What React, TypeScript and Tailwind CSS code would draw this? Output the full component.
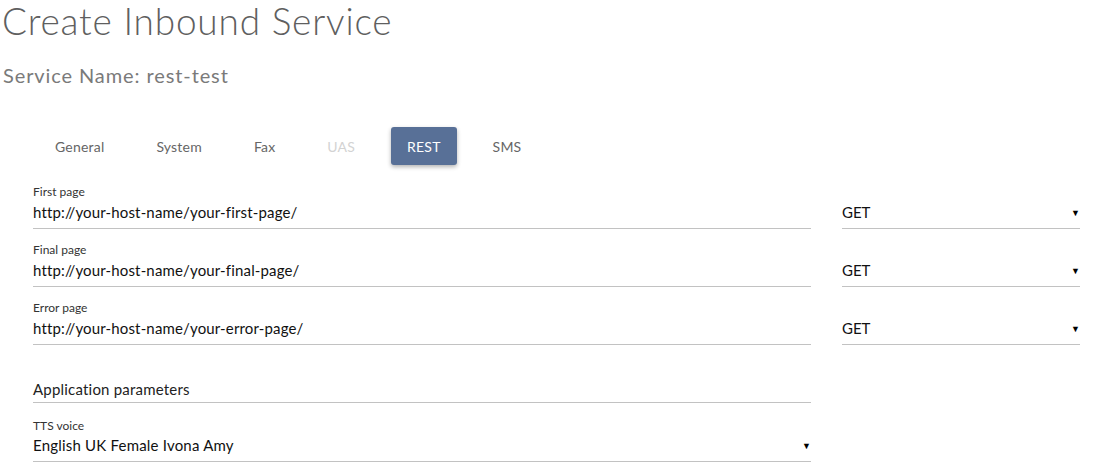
const tabs = [
  { name: "General", state: "normal" },
  { name: "System", state: "normal" },
  { name: "Fax", state: "normal" },
  { name: "UAS", state: "disabled" },
  { name: "REST", state: "active" },
  { name: "SMS", state: "normal" },
];

const pages = [
  { label: "First page", value: "http://your-host-name/your-first-page/" },
  { label: "Final page", value: "http://your-host-name/your-final-page/" },
  { label: "Error page", value: "http://your-host-name/your-error-page/" },
];

function Arrow() {
  return <span className="text-[9px] leading-none text-black">▼</span>;
}

export default function App() {
  return (
    <div className="min-h-[476px] w-[1093px] bg-white font-['Lato',sans-serif] text-[#333]">
      <h1 className="whitespace-nowrap pl-[2px] text-[37px] font-light leading-[42px] tracking-[0.8px] text-[#5f5f5f]">
        Create Inbound Service
      </h1>
      <h2 className="mt-[21px] pl-[3px] text-[20px] font-normal leading-[24px] tracking-[0.9px] text-[#7a7a7a]">
        Service Name: rest-test
      </h2>

      <div className="mt-[40px] flex gap-5 pl-[39px]">
        {tabs.map((t) =>
          t.state === "active" ? (
            <div
              key={t.name}
              className="flex h-[38px] items-center rounded-[3px] bg-[#587097] px-4 text-[14px] tracking-[0.2px] text-white shadow-[0_2px_4px_rgba(0,0,0,0.3)]"
            >
              {t.name}
            </div>
          ) : (
            <div
              key={t.name}
              className={
                t.state === "disabled"
                  ? "flex h-[38px] items-center px-4 text-[14px] tracking-[0.2px] text-[#d3d3d3]"
                  : "flex h-[38px] items-center px-4 text-[14px] tracking-[0.2px] text-[#666]"
              }
            >
              {t.name}
            </div>
          ),
        )}
      </div>

      <div className="mt-[19px] flex flex-col gap-[13px] pl-[33px]">
        {pages.map((p) => (
          <div key={p.label} className="flex items-end gap-[31px]">
            <div className="w-[778px] border-b border-[#c2c2c2] pb-[7px]">
              <div className="text-[12px] leading-[15px] text-[#333]">{p.label}</div>
              <div className="mt-[4px] text-[15px] leading-[18px] tracking-[0.15px] text-[#111]">{p.value}</div>
            </div>
            <div className="flex w-[238px] items-center justify-between border-b border-[#c2c2c2] pb-[7px]">
              <span className="text-[15px] leading-[18px] text-[#111]">GET</span>
              <Arrow />
            </div>
          </div>
        ))}

        <div className="mt-[22px] w-[778px] border-b border-[#c2c2c2] pb-[4px] text-[15px] leading-[18px] tracking-[0.2px] text-[#222]">
          Application parameters
        </div>

        <div className="mt-[2px] w-[778px] border-b border-[#c2c2c2] pb-[7px]">
          <div className="text-[12px] leading-[15px] text-[#333]">TTS voice</div>
          <div className="mt-[3px] flex items-center justify-between">
            <span className="text-[15px] leading-[18px] tracking-[0.2px] text-[#111]">English UK Female Ivona Amy</span>
            <Arrow />
          </div>
        </div>
      </div>
    </div>
  );
}
